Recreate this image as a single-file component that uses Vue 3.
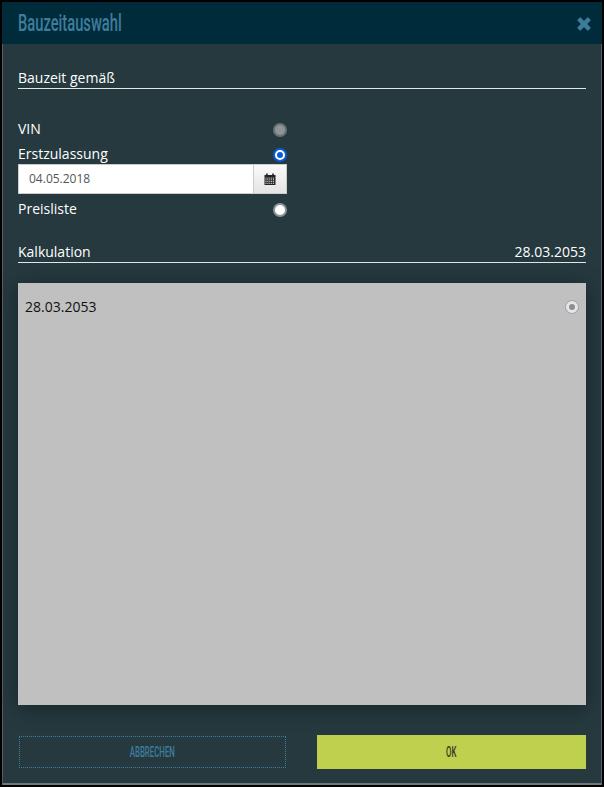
<script setup>
import { ref } from "vue";

const buildDate = ref("04.05.2018");
const calcDate = ref("28.03.2053");

// white day squares of the calendar icon
const calCells = [];
for (let row = 0; row < 4; row++) {
  for (let col = 0; col < 5; col++) {
    calCells.push({ x: 1.5 + col * 1.9, y: 4.6 + row * 1.75 });
  }
}
</script>

<template>
  <div class="dialog">
    <header class="head">
      <h1 class="title">Bauzeitauswahl</h1>
      <svg class="close" viewBox="0 0 16 16" width="16" height="16">
        <path d="M1.6 4.2 4.2 1.6 8 5.4 11.8 1.6 14.4 4.2 10.6 8 14.4 11.8 11.8 14.4 8 10.6 4.2 14.4 1.6 11.8 5.4 8 1.6 4.2Z" />
      </svg>
    </header>

    <main class="body">
      <div class="section first">
        <span>Bauzeit gemäß</span>
      </div>

      <div class="options">
        <div class="option vin">
          <span>VIN</span>
          <i class="radio disabled"></i>
        </div>
        <div class="option erst">
          <span>Erstzulassung</span>
          <i class="radio checked"></i>
        </div>
        <div class="date-field">
          <div class="date-value">{{ buildDate }}</div>
          <div class="date-btn">
            <svg viewBox="0 0 12 12" width="12" height="12">
              <path class="cal" d="M0.5 2H2.2V0.6H3.8V2H8.2V0.6H9.8V2H11.5V12H0.5Z" />
              <rect v-for="(c, i) in calCells" :key="i" class="cal-cell" :x="c.x" :y="c.y" width="1" height="1" />
            </svg>
          </div>
        </div>
        <div class="option preis">
          <span>Preisliste</span>
          <i class="radio"></i>
        </div>
      </div>

      <div class="section kalk">
        <span>Kalkulation</span>
        <span>{{ calcDate }}</span>
      </div>

      <div class="panel">
        <div class="panel-row">
          <span>{{ calcDate }}</span>
          <i class="radio small"></i>
        </div>
      </div>

      <div class="actions">
        <button class="btn cancel"><span class="narrow">ABBRECHEN</span></button>
        <button class="btn ok"><span class="narrow">OK</span></button>
      </div>
    </main>
  </div>
</template>

<style>
html,
body {
  margin: 0;
  background: #000;
}
</style>

<style scoped>
.dialog {
  box-sizing: border-box;
  width: 604px;
  height: 787px;
  padding: 2px;
  background: #000;
  display: flex;
  flex-direction: column;
  font-family: "Open Sans", sans-serif;
  font-size: 14px;
  color: #fff;
}

.head {
  height: 42px;
  flex: none;
  background: #002b3a;
  display: flex;
  align-items: center;
  justify-content: space-between;
  padding: 0 10px 0 16px;
}

.title {
  margin: 0;
  font-family: "Roboto", sans-serif;
  font-weight: 500;
  font-size: 23px;
  color: #3f7d9c;
  transform: scaleX(0.64);
  transform-origin: left center;
}

.close {
  fill: #3f7d9c;
  stroke: #3f7d9c;
  stroke-width: 1;
  stroke-linejoin: round;
  margin-top: 1px;
}

.body {
  flex: 1;
  background: #25393f;
  padding: 0 15px;
  border-left: 1px solid #555f63;
  border-right: 1px solid #555f63;
  border-bottom: 2px solid #6c7a80;
  display: flex;
  flex-direction: column;
}

.section {
  display: flex;
  justify-content: space-between;
  border-bottom: 1px solid #e4e6e6;
  line-height: 19px;
  height: 20px;
}

.first {
  margin-top: 24px;
}

.options {
  margin-top: 30px;
}

.option {
  display: flex;
  justify-content: space-between;
  align-items: center;
  width: 269px;
  height: 20px;
}

.option span {
  margin-top: -2px;
}

.option .radio {
  margin-top: 2px;
}

.erst,
.preis {
  margin-top: 5px;
}

.radio {
  box-sizing: border-box;
  width: 14px;
  height: 14px;
  border-radius: 50%;
  background: #fff;
  border: 2px solid #8a9498;
  flex: none;
}

.radio.disabled {
  background: #8f9595;
  border-color: #667276;
}

.radio.checked {
  background: #0a5bd8;
  border: none;
  position: relative;
}

.radio.checked::after {
  content: "";
  position: absolute;
  left: 2px;
  top: 2px;
  width: 6px;
  height: 6px;
  border: 2px solid #fff;
  border-radius: 50%;
  background: #0a5bd8;
}

.radio.small {
  width: 12px;
  height: 12px;
  background: #8d8d93;
  border: 3px solid #e6e6e8;
  box-shadow: 0 0 0 1px #a5a5a8;
}

.date-field {
  display: flex;
  width: 269px;
  height: 30px;
  background: #fff;
  border: 1px solid #ccc;
  box-sizing: border-box;
  color: #555;
  font-size: 12px;
}

.date-value {
  flex: 1;
  padding-left: 10px;
  line-height: 28px;
}

.date-btn {
  width: 32px;
  border-left: 1px solid #ccc;
  background: linear-gradient(#fafafa, #e4e4e4);
  display: flex;
  align-items: center;
  justify-content: center;
}

.cal {
  fill: #222;
}

.cal-cell {
  fill: #f4f4f4;
}

.kalk {
  margin-top: 23px;
}

.panel {
  margin-top: 20px;
  height: 422px;
  flex: none;
  background: #c0c0c0;
  color: #111;
  padding: 14px 8px 0 7px;
  box-sizing: border-box;
  box-shadow: 0 3px 20px rgba(0, 0, 0, 0.35);
}

.panel-row {
  display: flex;
  justify-content: space-between;
  align-items: center;
  line-height: 20px;
}

.actions {
  display: flex;
  justify-content: space-between;
  align-items: center;
  margin-top: 30px;
}

.btn {
  font-family: "Roboto", sans-serif;
  font-size: 14px;
  font-weight: 500;
  border: none;
  padding: 0;
  cursor: pointer;
}

.narrow {
  display: inline-block;
  transform: scaleX(0.56);
}

.cancel {
  width: 267px;
  height: 32px;
  margin-left: 1px;
  background: transparent;
  border: 1px dotted #3f7d9c;
  color: #3f7d9c;
}

.ok {
  width: 269px;
  height: 34px;
  background: #bfd04f;
  color: #33372a;
}
</style>
